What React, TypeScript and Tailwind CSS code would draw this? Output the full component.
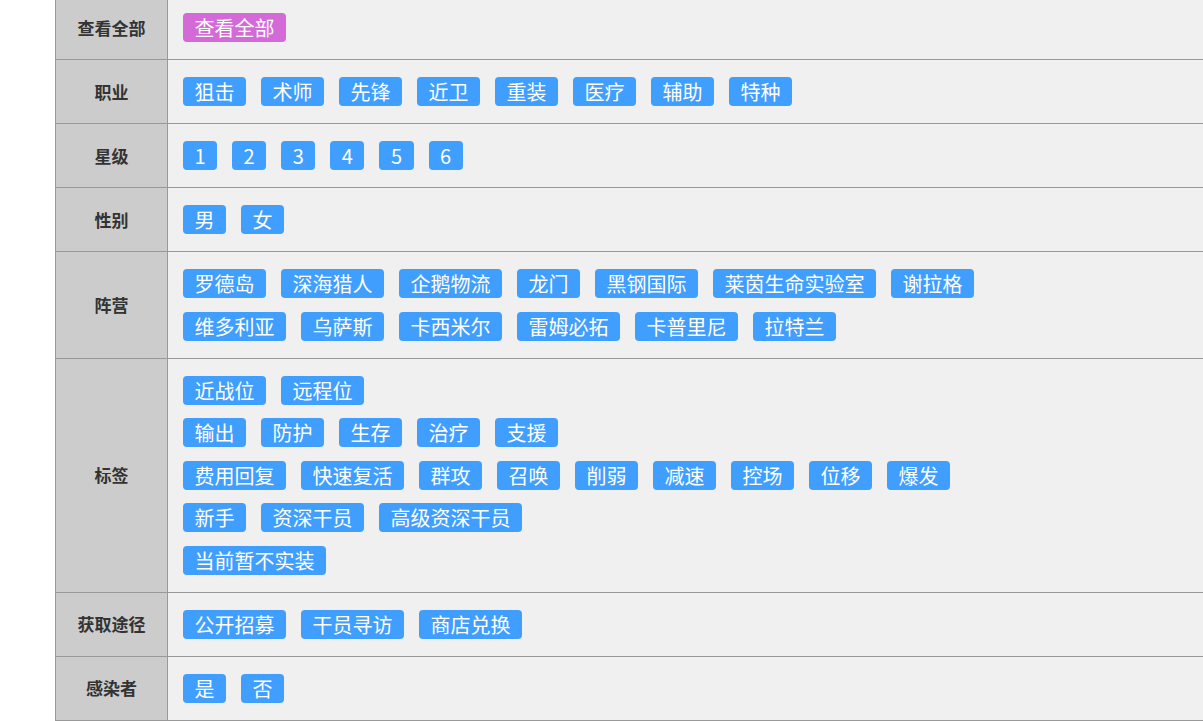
const rows: { label: string; groups: string[][]; purple?: boolean }[] = [
  { label: "查看全部", groups: [["查看全部"]], purple: true },
  { label: "职业", groups: [["狙击", "术师", "先锋", "近卫", "重装", "医疗", "辅助", "特种"]] },
  { label: "星级", groups: [["1", "2", "3", "4", "5", "6"]] },
  { label: "性别", groups: [["男", "女"]] },
  {
    label: "阵营",
    groups: [
      ["罗德岛", "深海猎人", "企鹅物流", "龙门", "黑钢国际", "莱茵生命实验室", "谢拉格"],
      ["维多利亚", "乌萨斯", "卡西米尔", "雷姆必拓", "卡普里尼", "拉特兰"],
    ],
  },
  {
    label: "标签",
    groups: [
      ["近战位", "远程位"],
      ["输出", "防护", "生存", "治疗", "支援"],
      ["费用回复", "快速复活", "群攻", "召唤", "削弱", "减速", "控场", "位移", "爆发"],
      ["新手", "资深干员", "高级资深干员"],
      ["当前暂不实装"],
    ],
  },
  { label: "获取途径", groups: [["公开招募", "干员寻访", "商店兑换"]] },
  { label: "感染者", groups: [["是", "否"]] },
];

function Tag({ text, purple }: { text: string; purple?: boolean }) {
  return (
    <span
      className={
        "h-[29px] px-[11.5px] rounded-[4px] text-white text-[20px] leading-[29px] whitespace-nowrap " +
        (purple ? "bg-[#d36ad8]" : "bg-[#409eff]")
      }
    >
      {text}
    </span>
  );
}

export default function App() {
  return (
    <div
      className="w-[1203px] h-[721px] overflow-hidden bg-white"
      style={{ fontFamily: '"Microsoft YaHei", "Noto Sans CJK SC", "Noto Sans", sans-serif' }}
    >
      <div className="ml-[55px] -mt-[5px] w-[1170px] border-l border-t border-[#999]">
        {rows.map((row) => (
          <div key={row.label} className="flex border-b border-[#999]">
            <div className="w-[112px] shrink-0 bg-[#cccccc] border-r border-[#999] flex items-center justify-center text-[17px] font-bold text-[#333]">
              {row.label}
            </div>
            <div className="flex-1 bg-[#f0f0f0] pl-[15px] py-[17px] flex flex-col gap-y-[13.5px]">
              {row.groups.map((g, i) => (
                <div key={i} className="flex gap-x-[15px]">
                  {g.map((t) => (
                    <Tag key={t} text={t} purple={row.purple} />
                  ))}
                </div>
              ))}
            </div>
          </div>
        ))}
      </div>
    </div>
  );
}
